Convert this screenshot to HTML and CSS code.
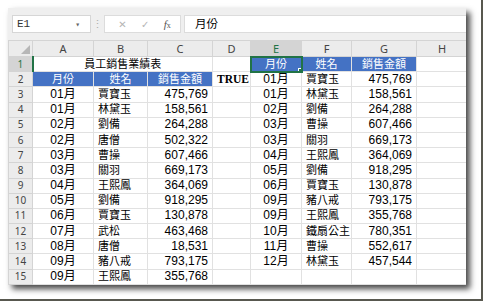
FILE: index.html
```html
<!DOCTYPE html>
<html lang="zh-Hant">
<head>
  <meta charset="UTF-8">
  <meta name="viewport" content="width=device-width, initial-scale=1.0">
  <title>員工銷售業績表</title>
  <link rel="stylesheet" href="styles.css">
</head>
<body>
  <div class="frame">
    <div class="window">
      <!-- Formula bar -->
      <div class="formula-bar">
        <div class="name-box"><span>E1</span><span class="caret">&#9662;</span></div>
        <div class="grip">&#8942;</div>
        <div class="fx-buttons">
          <span class="fx-btn">&#10005;</span>
          <span class="fx-btn">&#10003;</span>
          <span class="fx-btn fx"><i>f</i><small>x</small></span>
        </div>
        <div class="formula-input">月份</div>
      </div>

      <!-- Sheet -->
      <table class="sheet">
        <colgroup>
          <col class="c-row"><col class="c-a"><col class="c-b"><col class="c-c"><col class="c-d">
          <col class="c-e"><col class="c-f"><col class="c-g"><col class="c-h">
        </colgroup>
        <tr class="col-heads">
          <th class="corner"></th><th>A</th><th>B</th><th>C</th><th>D</th><th class="sel">E</th><th>F</th><th>G</th><th>H</th>
        </tr>
        <tr>
          <th class="sel">1</th><td colspan="3" class="title">員工銷售業績表</td><td></td>
          <td class="head active">月份</td><td class="head">姓名</td><td class="head">銷售金額</td><td></td>
        </tr>
        <tr>
          <th>2</th><td class="head">月份</td><td class="head">姓名</td><td class="head">銷售金額</td><td class="bool">TRUE</td>
          <td class="mid">01月</td><td class="name">賈寶玉</td><td class="num">475,769</td><td></td>
        </tr>
        <tr>
          <th>3</th><td class="mid">01月</td><td class="name">賈寶玉</td><td class="num">475,769</td><td></td>
          <td class="mid">01月</td><td class="name">林黛玉</td><td class="num">158,561</td><td></td>
        </tr>
        <tr>
          <th>4</th><td class="mid">01月</td><td class="name">林黛玉</td><td class="num">158,561</td><td></td>
          <td class="mid">02月</td><td class="name">劉備</td><td class="num">264,288</td><td></td>
        </tr>
        <tr>
          <th>5</th><td class="mid">02月</td><td class="name">劉備</td><td class="num">264,288</td><td></td>
          <td class="mid">03月</td><td class="name">曹操</td><td class="num">607,466</td><td></td>
        </tr>
        <tr>
          <th>6</th><td class="mid">02月</td><td class="name">唐僧</td><td class="num">502,322</td><td></td>
          <td class="mid">03月</td><td class="name">關羽</td><td class="num">669,173</td><td></td>
        </tr>
        <tr>
          <th>7</th><td class="mid">03月</td><td class="name">曹操</td><td class="num">607,466</td><td></td>
          <td class="mid">04月</td><td class="name">王熙鳳</td><td class="num">364,069</td><td></td>
        </tr>
        <tr>
          <th>8</th><td class="mid">03月</td><td class="name">關羽</td><td class="num">669,173</td><td></td>
          <td class="mid">05月</td><td class="name">劉備</td><td class="num">918,295</td><td></td>
        </tr>
        <tr>
          <th>9</th><td class="mid">04月</td><td class="name">王熙鳳</td><td class="num">364,069</td><td></td>
          <td class="mid">06月</td><td class="name">賈寶玉</td><td class="num">130,878</td><td></td>
        </tr>
        <tr>
          <th>10</th><td class="mid">05月</td><td class="name">劉備</td><td class="num">918,295</td><td></td>
          <td class="mid">09月</td><td class="name">豬八戒</td><td class="num">793,175</td><td></td>
        </tr>
        <tr>
          <th>11</th><td class="mid">06月</td><td class="name">賈寶玉</td><td class="num">130,878</td><td></td>
          <td class="mid">09月</td><td class="name">王熙鳳</td><td class="num">355,768</td><td></td>
        </tr>
        <tr>
          <th>12</th><td class="mid">07月</td><td class="name">武松</td><td class="num">463,468</td><td></td>
          <td class="mid">10月</td><td class="name">鐵扇公主</td><td class="num">780,351</td><td></td>
        </tr>
        <tr>
          <th>13</th><td class="mid">08月</td><td class="name">唐僧</td><td class="num">18,531</td><td></td>
          <td class="mid">11月</td><td class="name">曹操</td><td class="num">552,617</td><td></td>
        </tr>
        <tr>
          <th>14</th><td class="mid">09月</td><td class="name">豬八戒</td><td class="num">793,175</td><td></td>
          <td class="mid">12月</td><td class="name">林黛玉</td><td class="num">457,544</td><td></td>
        </tr>
        <tr>
          <th>15</th><td class="mid">09月</td><td class="name">王熙鳳</td><td class="num">355,768</td><td></td>
          <td></td><td></td><td></td><td></td>
        </tr>
      </table>
    </div>
  </div>
</body>
</html>
```

FILE: styles.css
```css
body {
  margin: 0;
  background: #fff;
  font-family: "Liberation Sans", "Noto Sans CJK TC", sans-serif;
  color: #000;
}

/* outer picture frame + drop shadow */
.frame {
  box-sizing: border-box;
  width: 483px;
  height: 301px;
  padding: 8px 0 0 8px;
  border-right: 2px solid #58584f;
  border-bottom: 2px solid #58584f;
}

.window {
  width: 458px;
  height: 277px;
  background: #fff;
  box-shadow: 4px 4px 6px rgba(0, 0, 0, 0.72);
  overflow: hidden;
}

/* formula bar */
.formula-bar {
  box-sizing: border-box;
  height: 32px;
  background: #efefef;
  display: flex;
  align-items: center;
  padding-left: 4px;
}

.name-box {
  box-sizing: border-box;
  width: 79px;
  height: 18px;
  background: #fff;
  border: 1px solid #d6d6d6;
  display: flex;
  align-items: center;
  justify-content: space-between;
  padding: 0 10px 0 4px;
  font-family: "Liberation Mono", monospace;
  font-size: 11px;
  color: #333;
}

.name-box .caret {
  font-size: 8px;
  color: #666;
}

.grip {
  width: 13px;
  text-align: center;
  color: #b0b0b0;
  font-size: 11px;
}

.fx-buttons {
  box-sizing: border-box;
  width: 77px;
  height: 18px;
  background: #fff;
  border: 1px solid #dcdcdc;
  display: flex;
  align-items: center;
  justify-content: space-around;
  padding: 0 2px 0 6px;
  color: #b5b5b5;
  font-family: "DejaVu Sans", sans-serif;
  font-size: 10px;
}

.fx-btn.fx {
  color: #555;
  font-family: "Liberation Serif", serif;
  font-size: 11px;
}

.fx-btn.fx small {
  font-size: 8px;
}

.formula-input {
  box-sizing: border-box;
  flex: 1;
  height: 18px;
  margin-left: 3px;
  background: #fff;
  border: 1px solid #dcdcdc;
  border-right: none;
  padding-left: 10px;
  font-size: 11.5px;
  line-height: 16px;
}

/* sheet grid */
.sheet {
  table-layout: fixed;
  width: 459px;
  border-collapse: collapse;
  font-size: 12px;
}

.c-row { width: 24px; }
.c-a { width: 61px; }
.c-b { width: 54px; }
.c-c { width: 65px; }
.c-d { width: 38px; }
.c-e { width: 51px; }
.c-f { width: 50px; }
.c-g { width: 65px; }
.c-h { width: 51px; }

.sheet tr {
  height: 15.2px;
}

.sheet td {
  border: 1px solid #e1e1e1;
  padding: 0 4px;
  white-space: nowrap;
  overflow: hidden;
  line-height: 13px;
}

.sheet th {
  background: #ececec;
  border: 1px solid #d4d4d4;
  font-family: "Noto Sans", sans-serif;
  font-weight: normal;
  font-size: 10px;
  color: #444;
  padding: 0;
  line-height: 13px;
}

.sheet .col-heads {
  height: 16px;
}

.sheet .col-heads th {
  font-size: 11px;
}

.sheet th.sel {
  background: #d4d4d4;
  color: #217346;
}

.col-heads th.sel {
  border-bottom: 2px solid #217346;
}

tr th.sel:first-child {
  border-right: 2px solid #217346;
}

.corner {
  position: relative;
}

.corner::after {
  content: "";
  position: absolute;
  right: 2px;
  bottom: 2px;
  border-style: solid;
  border-width: 0 0 9px 9px;
  border-color: transparent transparent #b7b7b7 transparent;
}

.title {
  text-align: center;
  font-size: 11px;
}

.name {
  font-size: 11px;
  padding-left: 2px;
}

.head {
  background: #4472c4;
  color: #fff;
  text-align: center;
  font-size: 11px;
}

.active {
  position: relative;
  outline: 2px solid #217346;
  outline-offset: -1px;
}

.active::after {
  content: "";
  position: absolute;
  right: -3px;
  bottom: -3px;
  width: 4px;
  height: 4px;
  background: #217346;
  border: 1px solid #fff;
}

.mid {
  text-align: center;
}

.num {
  text-align: right;
  padding-right: 7px;
}

.bool {
  text-align: center;
  font-family: "Liberation Serif", serif;
  font-weight: bold;
  font-size: 11.5px;
}
```
